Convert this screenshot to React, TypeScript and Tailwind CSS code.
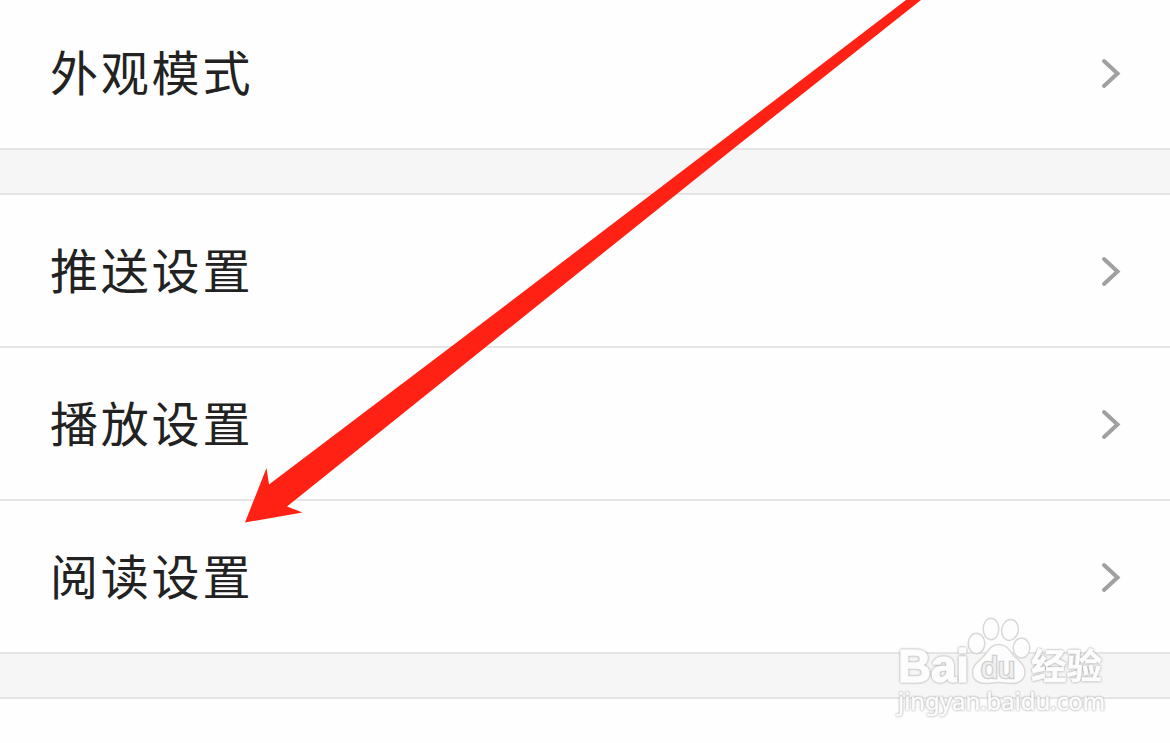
type RowProps = {
  label: string;
};

const generalRows = ["推送设置", "播放设置", "阅读设置"];

export default function App() {
  return (
    <main className="relative h-[743px] w-[1170px] overflow-hidden bg-[#fefefe] font-['Noto_Sans_CJK_SC',sans-serif]">
      <section className="-mt-[3px] border-b-2 border-[#e5e5e5]">
        <SettingRow label="外观模式" />
      </section>
      <div className="h-[43px] bg-[#f6f6f6]" />
      <ul className="divide-y-2 divide-[#e5e5e5] border-y-2 border-[#e5e5e5]">
        {generalRows.map((label) => (
          <li key={label}>
            <SettingRow label={label} />
          </li>
        ))}
      </ul>
      <div className="h-[43px] bg-[#f6f6f6]" />
      <div className="border-t-2 border-[#e5e5e5]" />
      <Watermark />
      <Arrow />
    </main>
  );
}

function SettingRow({ label }: RowProps) {
  return (
    <div className="flex h-[151px] items-center justify-between pt-0.5 pr-[49px] pl-[50px]">
      <span className="pb-[7px] text-[48px] leading-[72px] tracking-[2.8px] text-[#222]">
        {label}
      </span>
      <svg width="20" height="32" viewBox="0 0 20 32" fill="none">
        <path
          d="M3 3 16.5 15.5 3 28"
          stroke="#a0a0a0"
          strokeWidth="4"
          strokeLinecap="round"
        />
      </svg>
    </div>
  );
}

function Arrow() {
  return (
    <svg className="absolute inset-0" width="1170" height="743" viewBox="0 0 1170 743">
      <path
        d="M245 522.5 266.5 468 269 484.5 452 346 711 149 906 0H921L733 149 487 346 287 506.5 302.5 512.5Z"
        fill="#ff2113"
      />
    </svg>
  );
}

function Watermark() {
  return (
    <svg
      className="absolute top-[600px] left-[880px]"
      width="240"
      height="130"
      viewBox="0 0 240 130"
      fill="#fdfdfd"
      stroke="#d8d8d8"
      strokeWidth="1.5"
    >
      <g
        className="drop-shadow-[0_0_1px_#929292]"
        stroke="#fdfdfd"
        strokeWidth="1.6"
        strokeLinejoin="round"
      >
        <text
          x="18"
          y="82"
          fontFamily="Liberation Sans"
          fontWeight="700"
          fontSize="47"
          textLength="71"
          lengthAdjust="spacingAndGlyphs"
        >
          Bai
        </text>
        <text
          x="151"
          y="79"
          fontFamily="Noto Sans CJK SC"
          fontWeight="700"
          fontSize="35"
          strokeWidth="0.6"
          textLength="71"
          lengthAdjust="spacingAndGlyphs"
        >
          经验
        </text>
        <text
          x="18"
          y="110"
          fontFamily="Noto Sans"
          fontSize="24"
          strokeWidth="0.5"
          textLength="207"
          lengthAdjust="spacingAndGlyphs"
        >
          jingyan.baidu.com
        </text>
      </g>
      <ellipse cx="96.5" cy="43.5" rx="8.3" ry="10.3" />
      <ellipse cx="111" cy="29" rx="7.8" ry="10.8" />
      <ellipse cx="130" cy="30" rx="8.3" ry="10.5" transform="rotate(12 130 30)" />
      <ellipse cx="141.5" cy="48" rx="8.3" ry="10" />
      <path d="M118.5 44.5C128 44.5 130 52 135 57C141 62 145 66 145 72C145 80 139 84 131 83.5C126 83 123 82.5 118.5 82.5C114 82.5 111 83.5 106 83.5C97 83.5 92.5 79 92.5 72C92.5 65 98 62 103 57C108 52 110 44.5 118.5 44.5Z" />
      <text
        x="101"
        y="77.5"
        fontFamily="Liberation Sans"
        fontSize="29"
        fill="#f0f0f0"
        stroke="#cfcfcf"
        strokeWidth="2.6"
        paintOrder="stroke"
        textLength="34"
        lengthAdjust="spacingAndGlyphs"
      >
        du
      </text>
    </svg>
  );
}
